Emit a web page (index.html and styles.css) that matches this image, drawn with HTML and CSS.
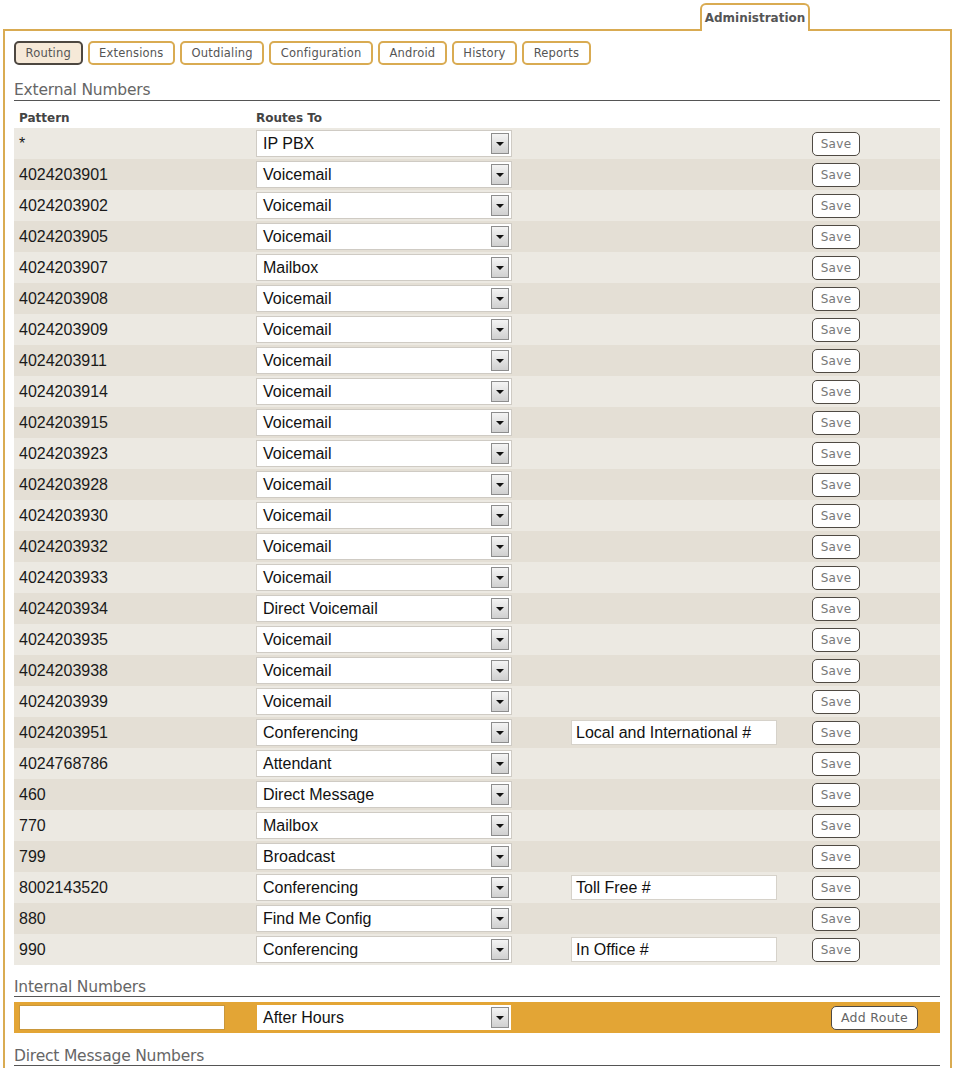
FILE: index.html
```html
<!DOCTYPE html>
<html>
<head>
<meta charset="utf-8">
<link rel="stylesheet" href="styles.css">
</head>
<body>
<div class="page">
  <div class="tabs"><div class="tab">Administration</div></div>
  <div class="panel">
    <div class="nav">
      <span class="navbtn active">Routing</span>
      <span class="navbtn">Extensions</span>
      <span class="navbtn">Outdialing</span>
      <span class="navbtn">Configuration</span>
      <span class="navbtn">Android</span>
      <span class="navbtn">History</span>
      <span class="navbtn">Reports</span>
    </div>

    <h2 class="section first">External Numbers</h2>
    <div class="thead">
      <span class="c1">Pattern</span>
      <span class="c2">Routes To</span>
    </div>
    <div class="rows" id="rows"></div>

    <h2 class="section">Internal Numbers</h2>
    <div class="addbar">
      <div class="c1"><span class="textbox wide"></span></div>
      <div class="c2"><div class="sel"><span class="seltext">After Hours</span><span class="arrow"><i></i></span></div></div>
      <div class="c3"></div>
      <div class="c4"><span class="btn addbtn">Add Route</span></div>
    </div>

    <h2 class="section last">Direct Message Numbers</h2>
  </div>
</div>
<script src="app.js"></script>
</body>
</html>
```

FILE: app.js
```js
var data = [
  ["*", "IP PBX", ""],
  ["4024203901", "Voicemail", ""],
  ["4024203902", "Voicemail", ""],
  ["4024203905", "Voicemail", ""],
  ["4024203907", "Mailbox", ""],
  ["4024203908", "Voicemail", ""],
  ["4024203909", "Voicemail", ""],
  ["4024203911", "Voicemail", ""],
  ["4024203914", "Voicemail", ""],
  ["4024203915", "Voicemail", ""],
  ["4024203923", "Voicemail", ""],
  ["4024203928", "Voicemail", ""],
  ["4024203930", "Voicemail", ""],
  ["4024203932", "Voicemail", ""],
  ["4024203933", "Voicemail", ""],
  ["4024203934", "Direct Voicemail", ""],
  ["4024203935", "Voicemail", ""],
  ["4024203938", "Voicemail", ""],
  ["4024203939", "Voicemail", ""],
  ["4024203951", "Conferencing", "Local and International #"],
  ["4024768786", "Attendant", ""],
  ["460", "Direct Message", ""],
  ["770", "Mailbox", ""],
  ["799", "Broadcast", ""],
  ["8002143520", "Conferencing", "Toll Free #"],
  ["880", "Find Me Config", ""],
  ["990", "Conferencing", "In Office #"]
];
var html = "";
data.forEach(function (r, i) {
  html += '<div class="row ' + (i % 2 ? "even" : "odd") + '">' +
    '<div class="c1 pat">' + r[0] + '</div>' +
    '<div class="c2"><div class="sel"><span class="seltext">' + r[1] + '</span><span class="arrow"><i></i></span></div></div>' +
    '<div class="c3">' + (r[2] ? '<span class="textbox">' + r[2] + '</span>' : '') + '</div>' +
    '<div class="c4"><span class="btn">Save</span></div>' +
    '</div>';
});
document.getElementById("rows").innerHTML = html;
```

FILE: styles.css
```css
* { box-sizing: border-box; }
html, body { margin: 0; padding: 0; background: #fff; }
body { font-family: "DejaVu Sans", "Liberation Sans", sans-serif; color: #444; }

.page { padding: 3px 2px 0 3px; width: 954px; }

.tabs { display: flex; justify-content: flex-end; padding-right: 142px; height: 26px; }
.tab {
  width: 110px; height: 28px;
  border: 2px solid #d9ab52; border-bottom: none;
  border-radius: 6px 6px 0 0;
  background: #fff;
  font-size: 12px; font-weight: bold; color: #555;
  text-align: center; line-height: 26px;
  position: relative; z-index: 1;
  margin-bottom: -2px;
}

.panel {
  border: 2px solid #d9ab52;
  border-bottom: none;
  padding: 10px 10px 0 9px;
  width: 949px;
  min-height: 1040px;
}

.nav { display: flex; gap: 5px; height: 24px; }
.navbtn {
  display: inline-flex; align-items: center; justify-content: center;
  height: 24px; padding: 0 9.5px;
  border: 2px solid #d9ab52; border-radius: 5px;
  font-size: 11.5px; color: #555; background: #fff;
  letter-spacing: 0.2px;
}
.navbtn.active { background: #f6e9d8; border-color: #4d4740; }

.section {
  margin: 0; font-weight: normal;
  font-size: 15.5px; color: #666;
  border-bottom: 1px solid #555;
  height: 32px; padding-top: 12px; line-height: 20px;
  letter-spacing: -0.2px;
}
.section.first { height: 36px; padding-top: 15px; }
.section.last { height: 33px; padding-top: 13px; }

.thead { display: flex; height: 27px; align-items: center; font-weight: bold; font-size: 12px; color: #444; padding-top: 6px; }

.c1 { width: 242px; padding-left: 5px; flex: none; }
.c2 { width: 315px; flex: none; }
.c3 { width: 241px; flex: none; }
.c4 { flex: 1; }

.row { display: flex; align-items: center; height: 31px; font-family: "Liberation Sans", Arial, sans-serif; font-size: 16px; color: #111; }
.row.odd { background: #ece9e2; }
.row.even { background: #e4dfd5; }
.pat { color: #1a1a1a; }

.sel {
  display: flex; align-items: center; justify-content: space-between;
  width: 256px; height: 27px;
  background: #fff; border: 1px solid #cfcbc4;
  padding: 0 1px 0 6px;
  font-family: "Liberation Sans", Arial, sans-serif; font-size: 16px; color: #111;
}
.seltext { padding-top: 1px; }
.arrow {
  width: 18px; height: 21px;
  border: 1px solid #8d8d8d;
  background: linear-gradient(#f4f4f4, #d0d0d0);
  display: flex; align-items: center; justify-content: center;
  margin-right: 1px;
}
.arrow i {
  width: 0; height: 0;
  border-left: 4px solid transparent; border-right: 4px solid transparent;
  border-top: 4px solid #111;
}

.textbox {
  display: flex; align-items: center;
  width: 206px; height: 25px;
  background: #fff; border: 1px solid #d6d2ca;
  padding: 1px 0 0 4px;
  font-family: "Liberation Sans", Arial, sans-serif; font-size: 16px; color: #111;
}
.textbox.wide { width: 206px; border: 1px solid #c9973b; }

.btn {
  display: inline-flex; align-items: center; justify-content: center;
  width: 48px; height: 24px; margin-left: 0;
  background: #fff; border: 1px solid #4f4a43; border-radius: 5px;
  font-family: "DejaVu Sans", sans-serif; font-size: 12px; color: #777;
  letter-spacing: 0.3px;
}

.addbar {
  display: flex; align-items: center; height: 31px;
  background: #e3a535; margin-top: 5px;
}
.addbar .c2 .sel { border-color: #e3a535; }
.addbtn { width: 87px; margin-left: 19px; font-size: 12.5px; color: #666; }
```
